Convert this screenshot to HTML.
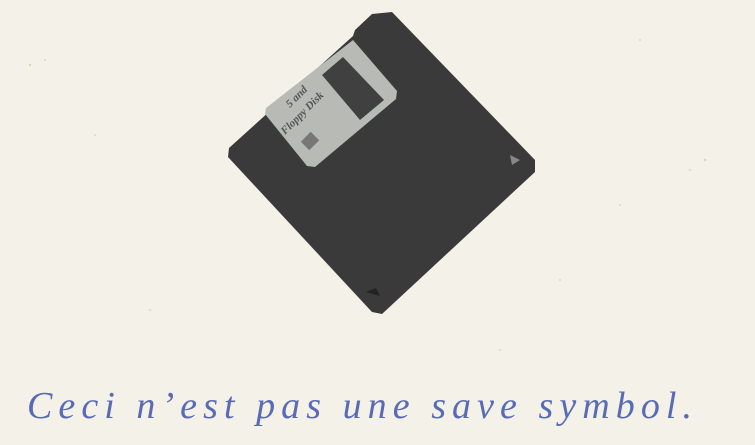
<!DOCTYPE html>
<html><head><meta charset="utf-8"><style>
html,body{margin:0;padding:0;background:#f4f1e8;}
body{width:755px;height:445px;overflow:hidden;position:relative;}
svg{position:absolute;left:0;top:0;}
</style></head><body>
<svg width="755" height="445" viewBox="0 0 755 445" xmlns="http://www.w3.org/2000/svg">
<rect width="755" height="445" fill="#f4f1e8"/>
<g fill="#d9c9a0" opacity="0.7">
<circle cx="30" cy="65" r="1.2"/><circle cx="45" cy="60" r="1"/><circle cx="95" cy="135" r="1"/><circle cx="705" cy="160" r="1.2"/><circle cx="690" cy="170" r="1"/><circle cx="620" cy="205" r="1"/><circle cx="560" cy="280" r="1"/><circle cx="150" cy="310" r="1"/><circle cx="500" cy="350" r="1"/><circle cx="640" cy="40" r="1"/>
</g>
<polygon points="372,14 392,12 535,160 535,172 382,314 372,312 228,157 229,148 353,36 355,30" fill="#3a3a3a"/>
<polygon points="353,40 397,91 396,99 315,167 307,166 265,114 266,108" fill="#b8bbb5"/>
<polygon points="322,75 343,57 384,100 360,120" fill="#404040"/>
<g fill="#555" font-family="Liberation Serif, serif" font-style="italic" font-weight="bold" font-size="11">
<text x="290" y="108" transform="rotate(-45 290 108)">5  and</text>
<text x="285" y="135" transform="rotate(-45 285 135)">Floppy Disk</text>
</g>
<rect x="303" y="135" width="14" height="12" fill="#777" transform="rotate(-45 310 141)"/>
<polygon points="510,155 520,160 512,165" fill="#888"/>
<polygon points="366,292 376,288 380,296" fill="#222"/>
<text x="27" y="418" textLength="665" lengthAdjust="spacing" font-family="Liberation Serif, serif" font-style="italic" font-size="38" fill="#5a6bb5">Ceci n’est pas une save symbol.</text>
</svg>
</body></html>
